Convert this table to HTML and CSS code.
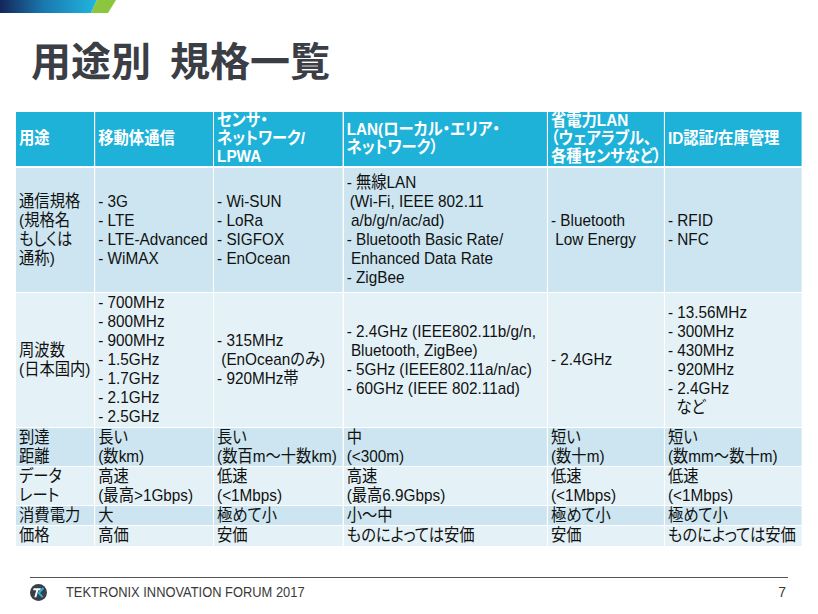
FILE: index.html
```html
<!DOCTYPE html>
<html lang="ja">
<head>
<meta charset="utf-8">
<title>用途別 規格一覧</title>
<link rel="stylesheet" href="styles.css">
</head>
<body>
<div class="slide">
  <div class="topbar">
    <svg width="120" height="13" viewBox="0 0 120 13">
      <defs>
        <linearGradient id="bar" x1="0" y1="0" x2="97" y2="0" gradientUnits="userSpaceOnUse">
          <stop offset="0" stop-color="#14265a"/>
          <stop offset="0.45" stop-color="#1a78b0"/>
          <stop offset="1" stop-color="#20b7df"/>
        </linearGradient>
      </defs>
      <polygon points="0,0 97,0 91,13 0,13" fill="url(#bar)"/>
      <polygon points="97,0 116,0 108,13 91,13" fill="#8cc63f"/>
    </svg>
  </div>

  <h1 class="title">用途別 規格一覧</h1>

  <table class="spec">
    <colgroup>
      <col class="c1"><col class="c2"><col class="c3"><col class="c4"><col class="c5"><col class="c6">
    </colgroup>
    <thead>
      <tr class="hd">
        <th>用途</th>
        <th>移動体通信</th>
        <th>センサ・<br>ネットワーク/<br>LPWA</th>
        <th>LAN(ローカル・エリア・<br>ネットワーク）</th>
        <th>省電力LAN<br>（ウェアラブル、<br>各種センサなど）</th>
        <th>ID認証/在庫管理</th>
      </tr>
    </thead>
    <tbody>
      <tr class="dark r1">
        <td>通信規格<br>(規格名<br>もしくは<br>通称)</td>
        <td>- 3G<br>- LTE<br>- LTE-Advanced<br>- WiMAX</td>
        <td>- Wi-SUN<br>- LoRa<br>- SIGFOX<br>- EnOcean</td>
        <td>- 無線LAN<br>&thinsp;(Wi-Fi, IEEE 802.11<br>&nbsp;a/b/g/n/ac/ad)<br>- Bluetooth Basic Rate/<br>&nbsp;Enhanced Data Rate<br>- ZigBee</td>
        <td>- Bluetooth<br>&nbsp;Low Energy</td>
        <td>- RFID<br>- NFC</td>
      </tr>
      <tr class="light r2">
        <td>周波数<br>(日本国内)</td>
        <td>- 700MHz<br>- 800MHz<br>- 900MHz<br>- 1.5GHz<br>- 1.7GHz<br>- 2.1GHz<br>- 2.5GHz</td>
        <td>- 315MHz<br>&nbsp;(EnOceanのみ)<br>- 920MHz帯</td>
        <td>- 2.4GHz (IEEE802.11b/g/n,<br>&nbsp;Bluetooth, ZigBee)<br>- 5GHz (IEEE802.11a/n/ac)<br>- 60GHz (IEEE 802.11ad)</td>
        <td>- 2.4GHz</td>
        <td>- 13.56MHz<br>- 300MHz<br>- 430MHz<br>- 920MHz<br>- 2.4GHz<br>&nbsp;&nbsp;など</td>
      </tr>
      <tr class="dark r3">
        <td>到達<br>距離</td>
        <td>長い<br>(数km)</td>
        <td>長い<br>(数百m〜十数km)</td>
        <td>中<br>(&lt;300m)</td>
        <td>短い<br>(数十m)</td>
        <td>短い<br>(数mm〜数十m)</td>
      </tr>
      <tr class="light r3">
        <td>データ<br>レート</td>
        <td>高速<br>(最高&gt;1Gbps)</td>
        <td>低速<br>(&lt;1Mbps)</td>
        <td>高速<br>(最高6.9Gbps)</td>
        <td>低速<br>(&lt;1Mbps)</td>
        <td>低速<br>(&lt;1Mbps)</td>
      </tr>
      <tr class="dark r5">
        <td>消費電力</td>
        <td>大</td>
        <td>極めて小</td>
        <td>小〜中</td>
        <td>極めて小</td>
        <td>極めて小</td>
      </tr>
      <tr class="light r6">
        <td>価格</td>
        <td>高価</td>
        <td>安価</td>
        <td>ものによっては安価</td>
        <td>安価</td>
        <td>ものによっては安価</td>
      </tr>
    </tbody>
  </table>

  <footer class="footer">
    <svg class="logo" width="17" height="17" viewBox="0 0 15 15">
      <circle cx="7.5" cy="7.5" r="7.5" fill="#3a3f47"/>
      <polygon points="3.2,3.8 9.6,3.8 9.1,5.5 7.4,5.5 5.6,11.6 3.8,11.6 5.6,5.5 2.8,5.5" fill="#ffffff"/>
      <polyline points="11.8,3.6 7.6,7.9 11.2,11.6" fill="none" stroke="#22b4dc" stroke-width="1.8"/>
    </svg>
    <span class="ftext">TEKTRONIX INNOVATION FORUM 2017</span>
    <span class="pnum">7</span>
  </footer>
</div>
</body>
</html>
```

FILE: styles.css
```css
html, body {
  margin: 0;
  padding: 0;
  background: #ffffff;
}

body {
  width: 818px;
  height: 614px;
  overflow: hidden;
  font-family: "Liberation Sans", "Noto Sans CJK JP", sans-serif;
}

.slide {
  width: 818px;
  height: 614px;
  overflow: hidden;
}

.topbar {
  height: 13px;
  line-height: 0;
}

.topbar svg {
  display: block;
}

.title {
  margin: 22px 0 28px 31px;
  font-family: "Noto Sans CJK JP", sans-serif;
  font-weight: 700;
  font-size: 40px;
  line-height: 48px;
  color: #3b3e45;
  word-spacing: 10px;
}

/* the slide text is set slightly condensed: draw at 17px, squeeze to 90% */
.spec {
  margin-left: 15px;
  width: 874px;
  table-layout: fixed;
  border-collapse: collapse;
  font-size: 17px;
  line-height: 19px;
  color: #111111;
  font-feature-settings: "palt";
  transform: scaleX(0.9);
  transform-origin: 0 0;
}

.c1 { width: 88px; }
.c2 { width: 132px; }
.c3 { width: 144px; }
.c4 { width: 227px; }
.c5 { width: 130px; }
.c6 { width: 153px; }

.spec th,
.spec td {
  border: 1px solid #ffffff;
  padding: 0 1px 0 3.5px;
  vertical-align: middle;
  text-align: left;
  white-space: nowrap;
  overflow: hidden;
}

.spec th {
  background: #1fb2d9;
  color: #ffffff;
  font-weight: 700;
  line-height: 18px;
}

.hd { height: 55px; }
.hd th { border-bottom: 2px solid #ffffff; }

.dark td { background: #cce5f0; }
.light td { background: #e4f1f7; }

.r1 { height: 125px; }
.r2 { height: 135px; }
.r3 { height: 39px; }
.r5 { height: 20px; }
.r6 { height: 21px; }

.footer {
  margin: 30px 30px 0 30px;
  border-top: 1px solid #555555;
  padding-top: 6px;
  display: flex;
  align-items: center;
}

.logo {
  display: block;
  flex: none;
}

.ftext {
  display: inline-block;
  margin-left: 19px;
  font-family: "Liberation Sans", sans-serif;
  font-size: 14px;
  line-height: 16px;
  color: #3a3a3a;
  transform: scaleX(0.92);
  transform-origin: 0 50%;
}

.pnum {
  margin-left: auto;
  margin-right: 2px;
  font-family: "Liberation Sans", sans-serif;
  font-size: 14px;
  line-height: 16px;
  color: #3a3a3a;
}
```
